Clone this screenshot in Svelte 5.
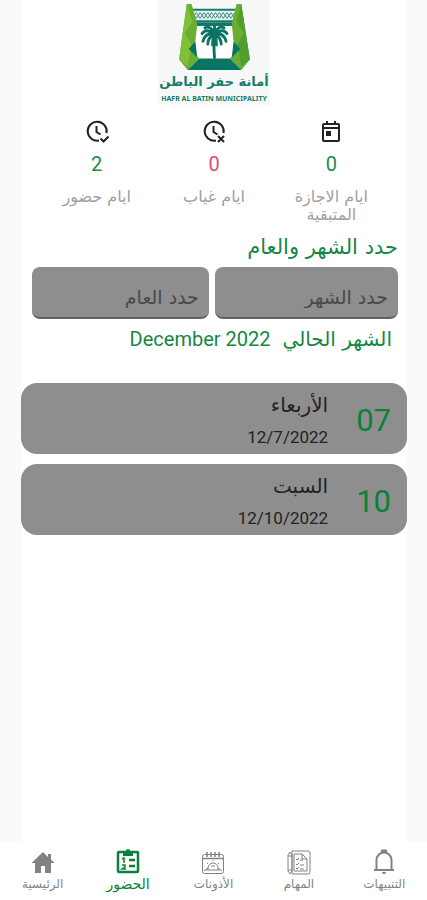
<script>
  const stats = [
    { icon: 'calendar', value: 0, label: 'ايام الاجازة المتبقية', tone: 'green' },
    { icon: 'absent', value: 0, label: 'ايام غياب', tone: 'red' },
    { icon: 'present', value: 2, label: 'ايام حضور', tone: 'green' }
  ];
  const days = [
    { number: '07', name: 'الأربعاء', date: '12/7/2022' },
    { number: '10', name: 'السبت', date: '12/10/2022' }
  ];
  const tabs = [
    { icon: 'bell', label: 'التنبيهات' },
    { icon: 'tasks', label: 'المهام' },
    { icon: 'leave', label: 'الأذونات' },
    { icon: 'clipboard', label: 'الحضور', active: true },
    { icon: 'home', label: 'الرئيسية' }
  ];
</script>

<div class="page" dir="rtl" lang="ar">
  <main>
    <header class="logo">
      <svg viewBox="0 0 76 70" width="73" height="67" aria-hidden="true">
        <path d="M17 12H59V62H17Z" fill="#fff" />
        <path d="M14 7H61L58 19H18Z" fill="#e7f2ee" />
        <path d="M14 7H61M17 19H59" stroke="#167d6d" stroke-width="2" />
        <path d="M15 10l4 6 4-6 4 6 4-6 4 6 4-6 4 6 4-6 4 6 4-6 4 6M15 16l4-6 4 6 4-6 4 6 4-6 4 6 4-6 4 6 4-6 4 6 4-6" fill="none" stroke="#318b80" stroke-width="1" />
        <path d="M15 20H60L57 24H19Z" fill="#12776a" />
        <path d="M9 1H14L20 22L18 40L12 48L22 58L10 70L1 59Z" fill="#69ad32" />
        <path d="M66 1H61L56 22L58 40L64 48L54 58L66 70L75 59Z" fill="#69ad32" />
        <path d="M9 1L1 59L10 66L14 43L7 31L15 20Z" fill="#82bf38" />
        <path d="M66 1L75 59L66 66L62 43L69 31L61 20Z" fill="#519e2c" />
        <path d="M22 58H54L66 70H10ZM18 40L11 48L20 57ZM58 40L65 48L56 57Z" fill="#087463" />
        <g fill="none" stroke="#087463" stroke-linecap="round">
          <path d="M38 31Q37 46 38 57" stroke-width="3" />
          <path d="M38 32Q34 23 28 26M38 32Q29 26 25 32M38 32Q28 31 26 40M38 32Q31 36 31 43M38 32Q36 37 36 44M38 32Q42 23 48 26M38 32Q47 26 51 32M38 32Q48 31 50 40M38 32Q45 36 45 43M38 32Q40 37 40 44M38 32V24" stroke-width="3" />
        </g>
      </svg>
      <strong>أمانة حفر الباطن</strong>
      <span dir="ltr">HAFR AL BATIN MUNICIPALITY</span>
    </header>

    <section class="stats">
      {#each stats as stat}
        <div class="stat">
          <svg viewBox="0 0 24 24" width="24" height="24" aria-hidden="true">
            {#if stat.icon === 'calendar'}
              <path d="M7 1v2H5a2 2 0 0 0-2 2v15a2 2 0 0 0 2 2h14a2 2 0 0 0 2-2V5a2 2 0 0 0-2-2h-2V1h-2v2H9V1ZM5 9h14v11H5ZM5 5h14v2H5ZM7 11h5v5H7Z" fill="currentColor" fill-rule="evenodd" />
            {:else}
              <path d="M14 20.500A9.500 9.500 0 1 1 21.500 13M11.500 6v6l4 2.500" fill="none" stroke="currentColor" stroke-width="2" />
              {#if stat.icon === 'absent'}
                <path d="M16 16l6 6M22 16l-6 6" stroke="currentColor" stroke-width="2" />
              {:else}
                <path d="M15.500 18.500l3 3 5-5" fill="none" stroke="currentColor" stroke-width="2" />
              {/if}
            {/if}
          </svg>
          <b class={stat.tone}>{stat.value}</b>
          <span>{stat.label}</span>
        </div>
      {/each}
    </section>

    <form class="filter">
      <h2>حدد الشهر والعام</h2>
      <div class="fields">
        <input class="month" aria-label="حدد الشهر" placeholder="حدد الشهر" />
        <input class="year" aria-label="حدد العام" placeholder="حدد العام" />
      </div>
      <p class="current"><span>الشهر الحالي</span><span dir="ltr">December 2022</span></p>
    </form>

    <section class="days">
      {#each days as day}
        <article>
          <b>{day.number}</b>
          <div>
            <h3>{day.name}</h3>
            <time dir="ltr">{day.date}</time>
          </div>
        </article>
      {/each}
    </section>
  </main>

  <nav>
    {#each tabs as tab}
      <a href="#{tab.icon}" class:active={tab.active} aria-current={tab.active ? 'page' : undefined}>
        <svg viewBox="0 0 28 28" width="28" height="28" aria-hidden="true" fill="none" stroke="currentColor">
          {#if tab.icon === 'bell'}
            <path d="M4 22H24M6.500 21V12a7.500 7.500 0 0 1 15 0V21M12 4V2.500h4V4" stroke-width="2" />
            <path d="M12 24a2 2 0 0 0 4 0Z" fill="currentColor" stroke="none" />
          {:else if tab.icon === 'tasks'}
            <path d="M7 3H23a2 2 0 0 1 2 2V24a2 2 0 0 1-2 2H7Z" />
            <path d="M9 6H17l5 5V23H9ZM17 6v5h5M3 7l2-3 2 3V23l-2 3-2-3ZM3 8h4M3 22h4" />
            <path d="M11 11l1 1 2-2M15 12h3M11 16l1 1 2-2M15 17h4M11 20l1 1 2-2M15 21h4" />
          {:else if tab.icon === 'leave'}
            <rect x="3.500" y="6.500" width="21" height="19" rx="2" />
            <path d="M4 10.500H24M8 4v5M12 4v5M16 4v5M20 4v5" stroke-width="1.500" />
            <path d="M7 22H21M9 22v-2a5 5 0 0 1 10 0v2M14 13v-1M8 15l1 1M20 15l-1 1M5 23l4-3M23 23l-4-3M12 18h4" />
          {:else if tab.icon === 'clipboard'}
            <rect x="4" y="4" width="20" height="20" rx="1" stroke-width="2.500" />
            <path d="M9 3h3a2 2 0 0 1 4 0h3v5H9Z" fill="currentColor" stroke="none" />
            <path d="M15 12h6M15 18h6" stroke-width="2.500" />
            <path d="M8 11l2-1v5M8 17h3v2l-3 2h4" stroke-width="1.500" />
          {:else}
            <path d="M14 4L2.500 15H6V25h6v-7h4v7h6V15h3.500L22 11.500V6h-3v3Z" fill="currentColor" stroke="none" />
          {/if}
        </svg>
        <span>{tab.label}</span>
      </a>
    {/each}
  </nav>
</div>

<style>
  :global(body) { margin: 0; background: #fafafa; }
  .page {
    min-height: 100vh;
    display: flex;
    flex-direction: column;
    font-family: Roboto, "DejaVu Sans", sans-serif;
    color: #222;
  }
  main { flex: 1; margin: 0 20px 0 21px; background: #fff; }
  h2, h3, p { margin: 0; font-weight: 400; }
  h2, h3, .stat span, .current span:first-child { font-family: "DejaVu Sans", sans-serif; }
  .logo {
    width: 112px;
    height: 105px;
    margin: 0 auto;
    display: flex;
    flex-direction: column;
    align-items: center;
    background: #f7f8f8;
    color: #167d6d;
    white-space: nowrap;
  }
  .logo svg { margin-top: 3px; }
  .logo strong { font: 700 13px/24px "DejaVu Sans", sans-serif; }
  .logo span { font: 700 7px/9px "Noto Sans", sans-serif; }
  .stats { display: flex; padding: 15px 17px 0; }
  .stat { flex: 1; display: flex; flex-direction: column; align-items: center; text-align: center; }
  .stat b { margin-top: 8px; font-size: 20px; line-height: 24px; font-weight: 400; }
  .stat span { width: 88px; margin-top: 12px; font-size: 16px; line-height: 18px; color: #a0a0a0; }
  .green { color: #198e4b; }
  .red { color: #e54870; }
  .filter { padding: 9px 9px 0 11px; color: #158743; }
  h2 { font-size: 21px; line-height: 28px; }
  .fields { display: flex; gap: 6px; margin-top: 6px; }
  input {
    box-sizing: border-box;
    min-width: 0;
    height: 52px;
    padding: 10px 10px 0;
    border: 0;
    border-bottom: 2px solid #626262;
    border-radius: 8px;
    background: #8e8e8e;
    color: #222;
    font: 19px/24px "DejaVu Sans", sans-serif;
  }
  .month { flex: 26; }
  .year { flex: 25; }
  input::placeholder { color: #494949; opacity: 1; }
  .current { display: flex; gap: 12px; padding: 6px 6px 0; font-size: 20px; line-height: 28px; }
  .days { display: flex; flex-direction: column; gap: 10px; margin-top: 30px; }
  article {
    display: flex;
    gap: 28px;
    align-items: center;
    padding: 6px 16px 2px;
    height: 63px;
    border-radius: 16px;
    background: #8e8e8e;
  }
  article b { font-size: 31px; line-height: 40px; font-weight: 400; color: #078238; }
  article div { display: flex; flex-direction: column; align-items: flex-start; }
  h3 { font-size: 20px; line-height: 32px; }
  time { font-size: 17px; line-height: 32px; }
  nav { display: flex; background: #fff; height: 58px; }
  nav a {
    flex: 1;
    display: flex;
    flex-direction: column;
    align-items: center;
    padding-top: 6px;
    color: #828282;
    text-decoration: none;
    font: 12px/16px "DejaVu Sans", sans-serif;
  }
  nav .active { color: #078238; font-size: 14px; }
</style>
